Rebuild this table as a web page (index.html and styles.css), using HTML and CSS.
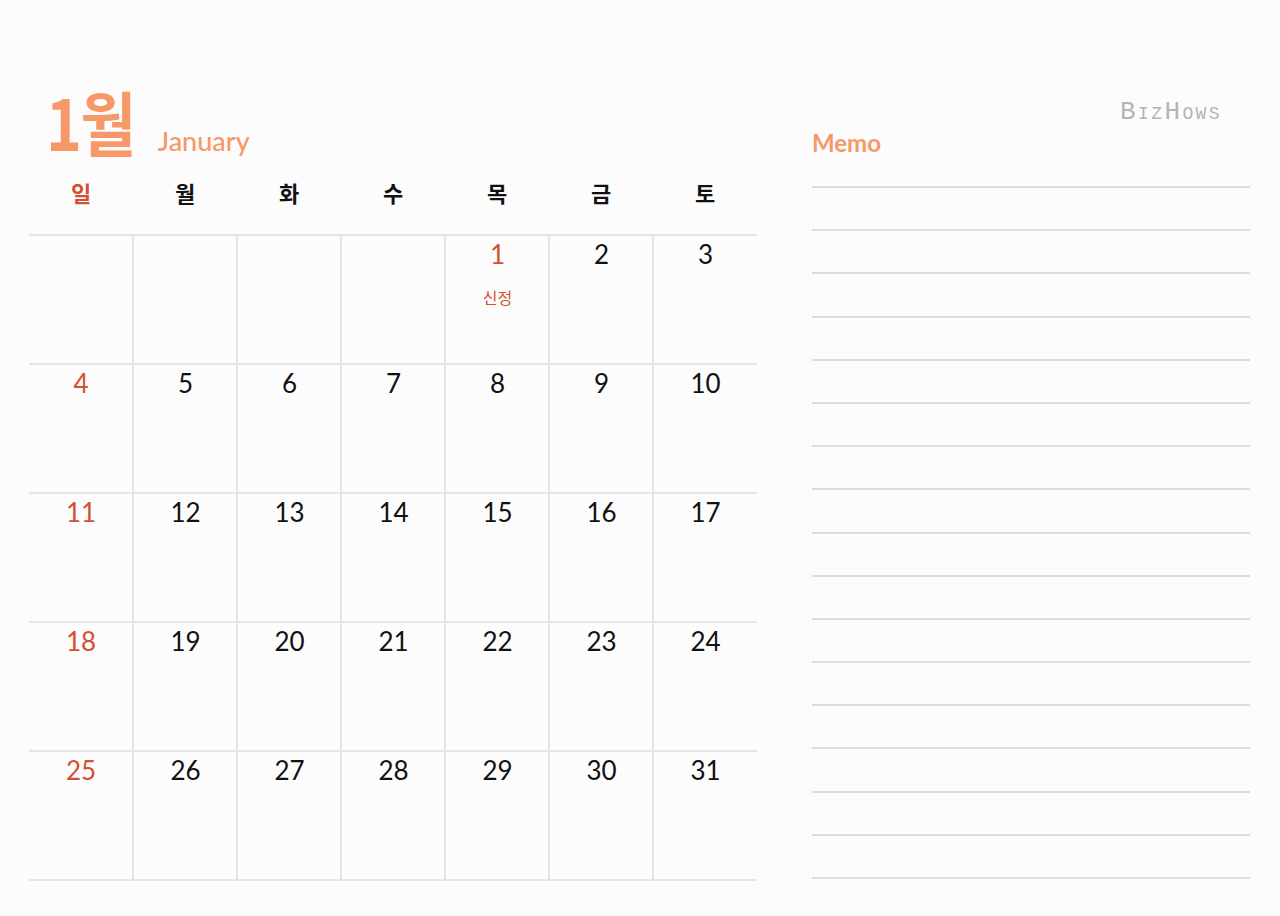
FILE: index.html
```html
<!DOCTYPE html>
<html lang="ko">
<head>
<meta charset="utf-8">
<link rel="stylesheet" href="styles.css">
</head>
<body>
<div class="page">
  <section class="calendar">
    <div class="title">
      <span class="month">1월</span>
      <span class="month-en">January</span>
    </div>
    <div class="weekdays">
      <div class="wd sun">일</div>
      <div class="wd">월</div>
      <div class="wd">화</div>
      <div class="wd">수</div>
      <div class="wd">목</div>
      <div class="wd">금</div>
      <div class="wd">토</div>
    </div>
    <div class="grid">
      <div class="cell"></div>
      <div class="cell"></div>
      <div class="cell"></div>
      <div class="cell"></div>
      <div class="cell"><span class="num red">1</span><span class="holiday">신정</span></div>
      <div class="cell"><span class="num">2</span></div>
      <div class="cell"><span class="num">3</span></div>

      <div class="cell"><span class="num red">4</span></div>
      <div class="cell"><span class="num">5</span></div>
      <div class="cell"><span class="num">6</span></div>
      <div class="cell"><span class="num">7</span></div>
      <div class="cell"><span class="num">8</span></div>
      <div class="cell"><span class="num">9</span></div>
      <div class="cell"><span class="num">10</span></div>

      <div class="cell"><span class="num red">11</span></div>
      <div class="cell"><span class="num">12</span></div>
      <div class="cell"><span class="num">13</span></div>
      <div class="cell"><span class="num">14</span></div>
      <div class="cell"><span class="num">15</span></div>
      <div class="cell"><span class="num">16</span></div>
      <div class="cell"><span class="num">17</span></div>

      <div class="cell"><span class="num red">18</span></div>
      <div class="cell"><span class="num">19</span></div>
      <div class="cell"><span class="num">20</span></div>
      <div class="cell"><span class="num">21</span></div>
      <div class="cell"><span class="num">22</span></div>
      <div class="cell"><span class="num">23</span></div>
      <div class="cell"><span class="num">24</span></div>

      <div class="cell"><span class="num red">25</span></div>
      <div class="cell"><span class="num">26</span></div>
      <div class="cell"><span class="num">27</span></div>
      <div class="cell"><span class="num">28</span></div>
      <div class="cell"><span class="num">29</span></div>
      <div class="cell"><span class="num">30</span></div>
      <div class="cell"><span class="num">31</span></div>
    </div>
  </section>
  <aside class="memo">
    <div class="brand">BizHows</div>
    <div class="memo-title">Memo</div>
    <div class="lines">
      <div class="line"></div><div class="line"></div><div class="line"></div>
      <div class="line"></div><div class="line"></div><div class="line"></div>
      <div class="line"></div><div class="line"></div><div class="line"></div>
      <div class="line"></div><div class="line"></div><div class="line"></div>
      <div class="line"></div><div class="line"></div><div class="line"></div>
      <div class="line"></div><div class="line"></div>
    </div>
  </aside>
</div>
</body>
</html>
```

FILE: styles.css
```css
html, body {
  margin: 0;
  padding: 0;
  background: #fdfcfd;
}

body {
  width: 1280px;
  height: 916px;
  overflow: hidden;
  font-family: "Noto Sans CJK KR", "Noto Sans", sans-serif;
  color: #111;
}

.page {
  display: flex;
  padding-left: 29px;
}

.calendar {
  width: 728px;
}

.title {
  height: 88px;
  margin-top: 80px;
  display: flex;
  align-items: baseline;
  padding-left: 17px;
  line-height: 88px;
  color: #f79868;
}

.month {
  display: inline-block;
  font-family: "Noto Sans CJK KR", sans-serif;
  font-size: 70px;
  font-weight: 700;
  letter-spacing: -2px;
  transform: scaleX(0.87);
  transform-origin: left bottom;
  position: relative;
  top: -3px;
}

.month-en {
  font-family: Lato, "Noto Sans", sans-serif;
  font-size: 27px;
  font-weight: 500;
  margin-left: 10px;
  position: relative;
  top: -3px;
}

.weekdays {
  display: grid;
  grid-template-columns: repeat(7, 104px);
  height: 66px;
}

.wd {
  text-align: center;
  line-height: 48px;
  font-size: 22px;
  font-weight: 700;
  color: #111;
}

.wd.sun {
  color: #d4502e;
}

.grid {
  display: grid;
  grid-template-columns: repeat(7, 104px);
  grid-auto-rows: 129px;
  border-bottom: 2px solid #e8e5e8;
}

.cell {
  border-top: 2px solid #e8e5e8;
  border-left: 2px solid #e6e2e6;
  display: flex;
  flex-direction: column;
  align-items: center;
  padding-top: 3px;
  box-sizing: border-box;
  margin-left: -1px;
}

.cell:nth-child(7n+1) {
  border-left: none;
  margin-left: 0;
}

.num {
  font-family: Lato, "Noto Sans", sans-serif;
  font-size: 26px;
  line-height: 30px;
  color: #111;
}

.num.red {
  color: #d4502e;
}

.holiday {
  margin-top: 18px;
  font-size: 16px;
  line-height: 20px;
  color: #d4502e;
}

.memo {
  margin-left: 55px;
  width: 438px;
}

.brand {
  margin-top: 97px;
  height: 30px;
  line-height: 30px;
  text-align: right;
  padding-right: 28px;
  font-family: "Liberation Mono", monospace;
  font-size: 26px;
  font-variant: small-caps;
  letter-spacing: 2.4px;
  color: #b4b4b4;
}

.memo-title {
  height: 30px;
  line-height: 30px;
  margin-top: 1px;
  font-family: Lato, "Noto Sans", sans-serif;
  font-size: 24px;
  font-weight: 700;
  color: #f79868;
}

.lines {
  margin-top: 28px;
  display: flex;
  flex-direction: column;
  gap: 41.2px;
}

.line {
  height: 2px;
  background: #dedcde;
}
```
